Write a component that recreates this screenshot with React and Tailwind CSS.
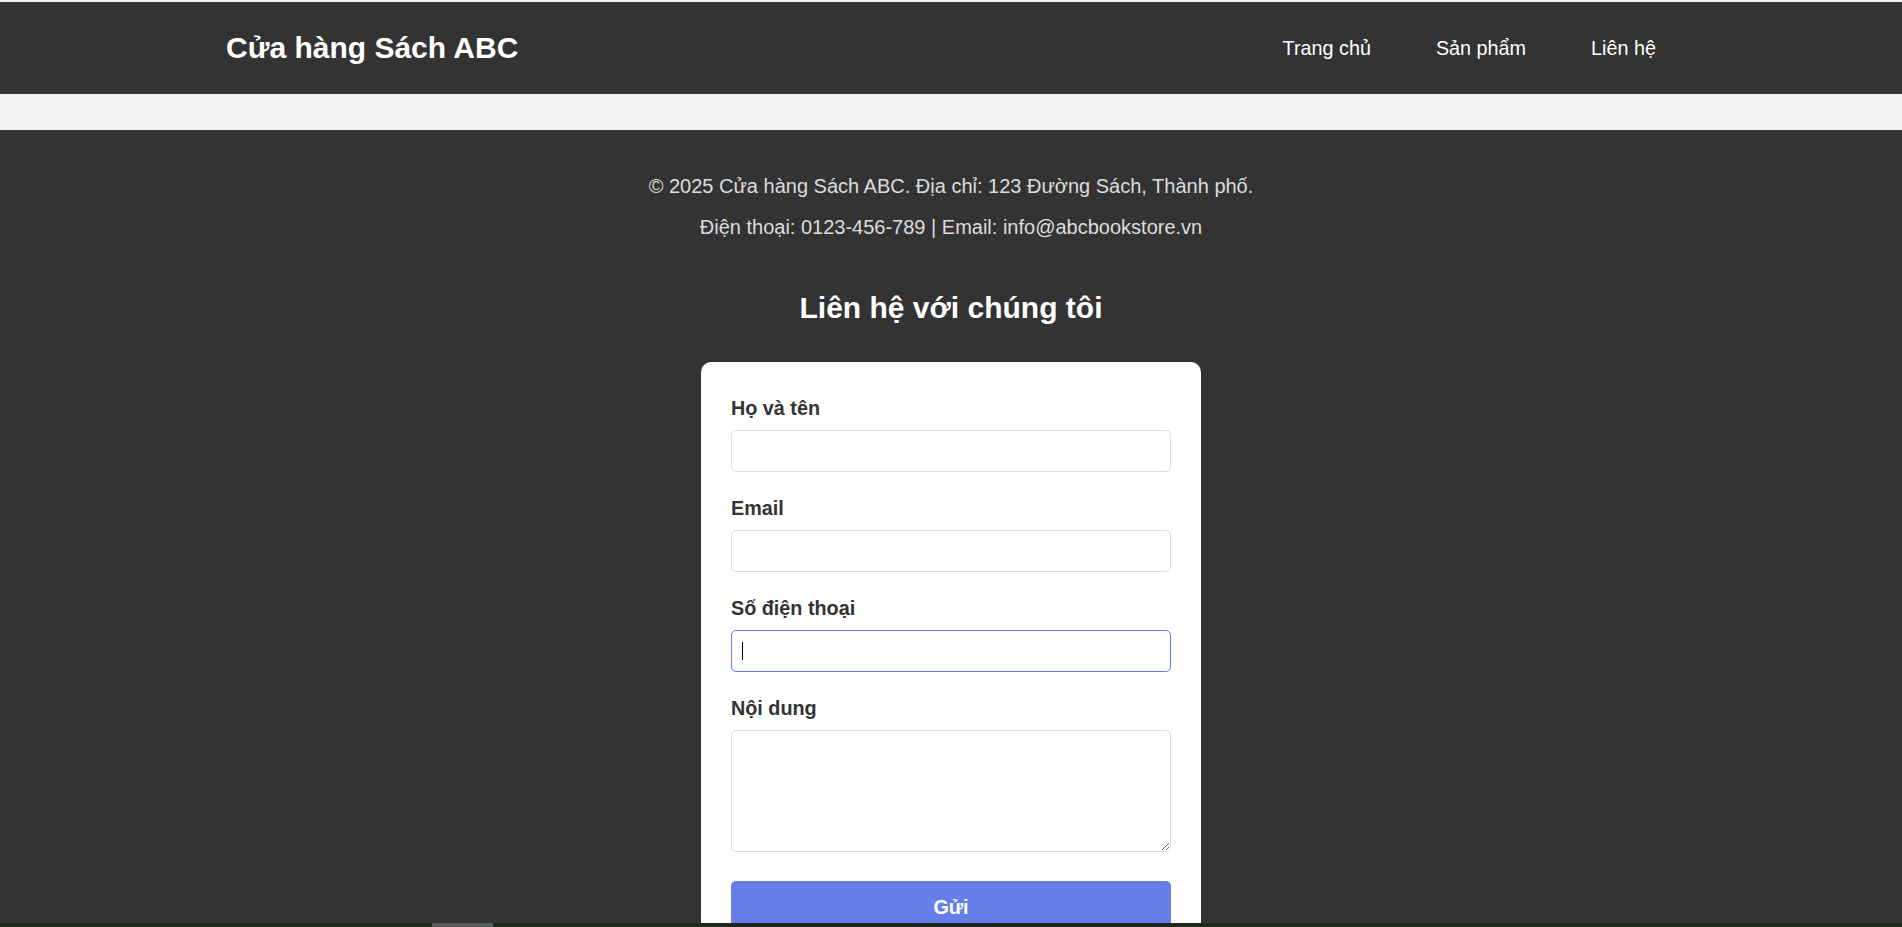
export default function App() {
  return (
    <div className="h-[927px] overflow-hidden bg-[#f4f4f4] pt-[2px] flex flex-col font-['Liberation_Sans',Arial,sans-serif]">
      <header className="bg-[#333333] h-[92px] flex items-center shrink-0">
        <div className="w-[1450px] mx-auto flex items-center justify-between">
          <h1 className="text-[30px] leading-[34px] font-bold text-white">Cửa hàng Sách ABC</h1>
          <nav>
            <ul className="flex gap-[65px] pr-[20px] text-[19.8px] leading-[22px] text-white">
              <li><a href="#">Trang chủ</a></li>
              <li><a href="#">Sản phẩm</a></li>
              <li><a href="#">Liên hệ</a></li>
            </ul>
          </nav>
        </div>
      </header>

      <main className="h-[36px] shrink-0"></main>

      <footer className="bg-[#333333] flex-1 pt-[45px] text-center">
        <p className="text-[20px] leading-[23px] text-[#dddddd]">
          © 2025 Cửa hàng Sách ABC. Địa chỉ: 123 Đường Sách, Thành phố.
        </p>
        <p className="mt-[18px] text-[20px] leading-[23px] text-[#dddddd]">
          Điện thoại: 0123-456-789 | Email: info@abcbookstore.vn
        </p>

        <section>
          <h2 className="mt-[52px] text-[30px] leading-[34px] font-bold text-white">Liên hệ với chúng tôi</h2>
          <form className="mt-[37px] w-[500px] mx-auto bg-white rounded-[10px] px-[30px] pt-[35px] pb-[30px] text-left">
            <div className="mb-[25px]">
              <label className="block text-[19.8px] leading-[22px] font-bold text-[#333333] mb-[11px]">Họ và tên</label>
              <input type="text" className="block w-full h-[42px] border border-[#dddddd] rounded-[5px] px-[10px] outline-none" />
            </div>
            <div className="mb-[25px]">
              <label className="block text-[19.8px] leading-[22px] font-bold text-[#333333] mb-[11px]">Email</label>
              <input type="email" className="block w-full h-[42px] border border-[#dddddd] rounded-[5px] px-[10px] outline-none" />
            </div>
            <div className="mb-[25px]">
              <label className="block text-[19.8px] leading-[22px] font-bold text-[#333333] mb-[11px]">Số điện thoại</label>
              <div className="relative">
                <input type="tel" className="block w-full h-[42px] border border-[#667eea] rounded-[5px] px-[10px] outline-none" />
                <span className="absolute left-[11px] top-[12px] w-[1px] h-[18px] bg-black"></span>
              </div>
            </div>
            <div className="mb-[29px]">
              <label className="block text-[19.8px] leading-[22px] font-bold text-[#333333] mb-[11px]">Nội dung</label>
              <textarea className="block w-full h-[122px] border border-[#dddddd] rounded-[5px] px-[10px] py-[10px] outline-none"></textarea>
            </div>
            <button type="button" className="block w-full bg-[#667eea] text-white text-[19.8px] leading-[22px] font-bold rounded-[5px] py-[15px]">
              Gửi
            </button>
          </form>
        </section>
      </footer>

      <div className="fixed bottom-0 left-0 right-0 h-[4px] bg-[#1f271f]">
        <div className="ml-[432px] w-[61px] h-full bg-[#5a5e5a]"></div>
      </div>
    </div>
  );
}
